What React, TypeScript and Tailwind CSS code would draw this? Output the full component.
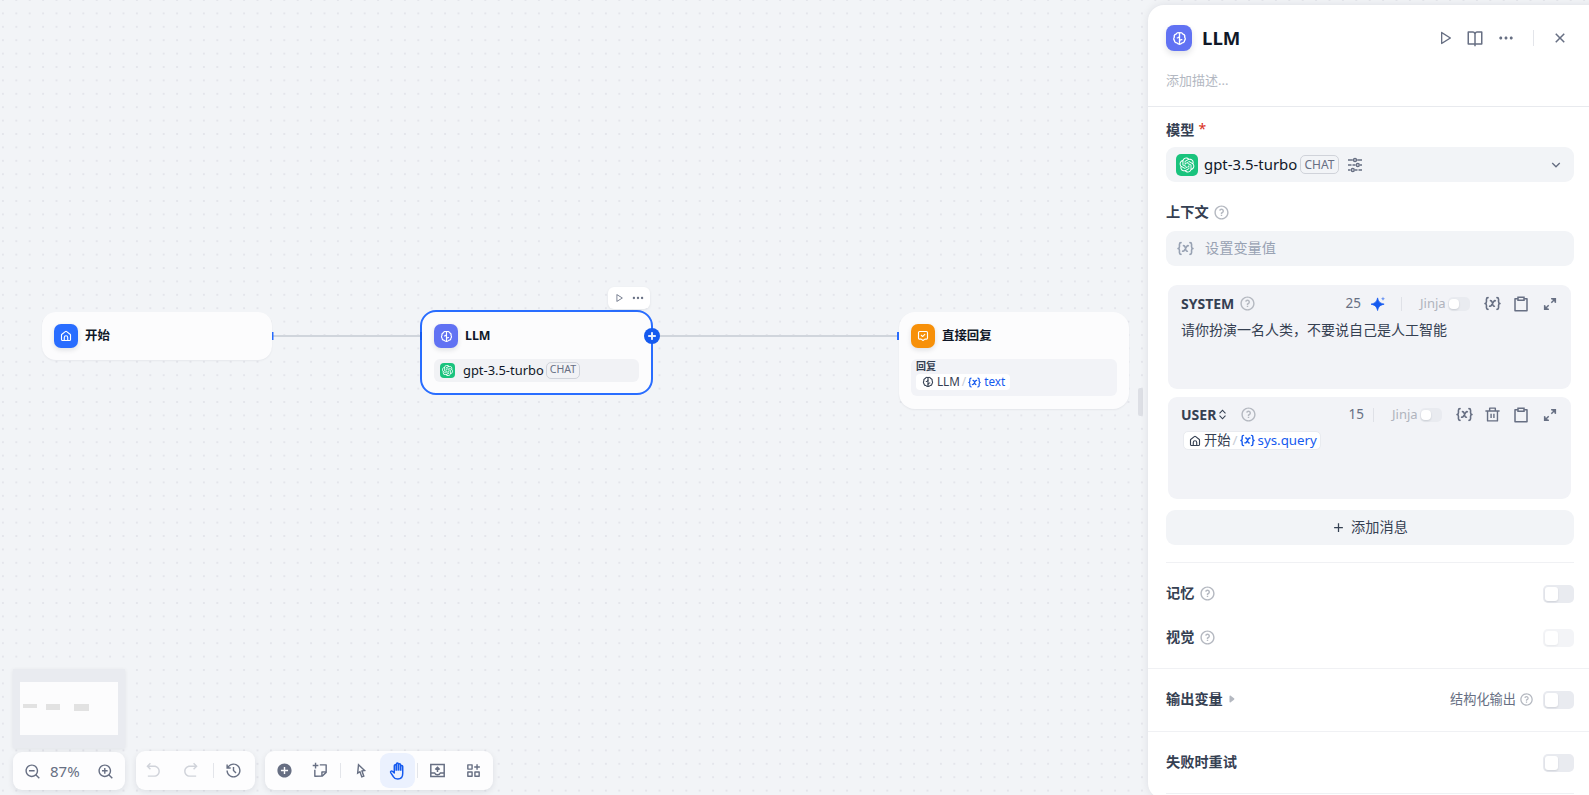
import type { ReactNode } from 'react'
import {
  RiPlayLargeLine, RiBookOpenLine, RiMoreFill, RiCloseLine, RiArrowDownSLine,
  RiQuestionLine, RiClipboardLine, RiDeleteBinLine, RiZoomOutLine, RiZoomInLine,
  RiArrowGoBackLine, RiArrowGoForwardLine, RiHistoryLine, RiAddCircleFill, RiStickyNoteAddLine,
  RiCursorLine, RiFunctionAddLine, RiAddLine, RiOpenaiFill, RiExpandUpDownLine,
} from 'react-icons/ri'

type IconProps = { className?: string }

const BrainIcon = ({ className }: IconProps) => (
  <svg viewBox="0 0 16 16" fill="none" stroke="currentColor" strokeWidth="1.4" strokeLinecap="round" strokeLinejoin="round" className={className}>
    <path d="M8 1.900v12.200" />
    <path d="M8 2.200C6.500 1.300 4.800 2 4.300 3.400 2.800 3.900 2.100 5.400 2.500 6.700 1.600 7.600 1.600 9.200 2.600 10 2.600 11.700 3.900 12.800 5.300 12.600 6.100 13.800 7.200 14.200 8 13.600" />
    <path d="M8 2.200C9.500 1.300 11.200 2 11.700 3.400 13.200 3.900 13.900 5.400 13.500 6.700 14.400 7.600 14.400 9.200 13.400 10 13.400 11.700 12.100 12.800 10.700 12.600 9.900 13.800 8.800 14.200 8 13.600" />
    <path d="M5.600 7.300c1.400.1 2.300-.6 2.400-1.900M10.500 9.300c-1.400-.1-2.400.6-2.500 1.900" />
  </svg>
)

const HomeIcon = ({ className }: IconProps) => (
  <svg viewBox="0 0 16 16" fill="none" stroke="currentColor" strokeWidth="1.500" strokeLinecap="round" strokeLinejoin="round" className={className}>
    <path d="M2 6.800c0-.5.200-.9.600-1.200l4.500-3.500c.5-.4 1.300-.4 1.800 0l4.500 3.500c.4.300.6.700.6 1.200V12.500c0 .8-.7 1.500-1.500 1.500h-9C2.700 14 2 13.300 2 12.500z" />
    <path d="M5.700 14V9.900a2.300 2.300 0 0 1 4.600 0V14" />
  </svg>
)

const AnswerIcon = ({ className }: IconProps) => (
  <svg viewBox="0 0 16 16" fill="none" stroke="currentColor" strokeWidth="1.500" strokeLinecap="round" strokeLinejoin="round" className={className}>
    <path d="M3.500 2h9c.8 0 1.500.7 1.500 1.500v7.200c0 .8-.7 1.500-1.500 1.500h-2L8 14l-2.500-1.800h-2c-.8 0-1.500-.7-1.500-1.500V3.500C2 2.700 2.700 2 3.500 2z" />
    <path d="M5.700 7l1.700 1.700 3-3" />
  </svg>
)

const VarIcon = ({ className }: IconProps) => (
  <svg viewBox="0 0 16 16" fill="none" stroke="currentColor" strokeWidth="1.500" strokeLinecap="round" strokeLinejoin="round" className={className}>
    <path d="M3.800 2.500C2.600 2.500 2.300 3.200 2.300 4v2.300c0 .9-.4 1.500-1.300 1.700.9.200 1.300.8 1.300 1.700V12c0 .8.300 1.500 1.500 1.500" />
    <path d="M12.200 2.500c1.200 0 1.500.7 1.500 1.500v2.300c0 .9.400 1.500 1.300 1.700-.9.200-1.300.8-1.300 1.700V12c0 .8-.3 1.500-1.500 1.500" />
    <path d="M6.100 5.300c.9 0 1.200.3 1.500 1.200l.8 2.800c.3.900.6 1.300 1.400 1.300M10.700 5.400c-.6-.2-1.100.1-1.600.9L7 9.600c-.5.800-1 1.100-1.700.9" />
  </svg>
)

const SlidersIcon = ({ className }: IconProps) => (
  <svg viewBox="0 0 16 16" fill="none" stroke="currentColor" strokeWidth="1.350" className={className}>
    <path d="M1 3h4.800M10.200 3H15M1 8h3.500M5.500 8h3M13 8h2M1 13h2.500M8 13h2.500M11.500 13H15" />
    <circle cx="8" cy="3" r="1.500" />
    <circle cx="10.800" cy="8" r="1.500" />
    <circle cx="5.800" cy="13" r="1.500" />
  </svg>
)

const HandIcon = ({ className }: IconProps) => (
  <svg viewBox="0 0 16 16" fill="none" className={className}>
    <path d="M4.600 8V3.200a.9.900 0 0 1 1.800 0V1.900a.9.900 0 0 1 1.900 0v.7a.9.900 0 0 1 1.900 0v1.100a.9.900 0 0 1 1.800 0V8z" fill="#155aef" fillOpacity=".3" />
    <path d="M4.700 9.700V3.300a.9.900 0 0 1 1.800 0V7.200M6.500 7V1.900a.95.950 0 0 1 1.900 0V7M8.400 7V2.500a.95.950 0 0 1 1.900 0V7.200M10.300 7.200V4a.95.950 0 0 1 1.900 0v6.300c0 2.900-1.700 4.900-4.400 4.900-2 0-3.100-.8-4-2.300L1.500 9.400c-.5-.9.600-1.900 1.500-1.200L4.700 9.700" stroke="#155aef" strokeWidth="1.300" strokeLinecap="round" strokeLinejoin="round" />
  </svg>
)

const ExportIcon = ({ className }: IconProps) => (
  <svg viewBox="0 0 16 16" fill="none" stroke="currentColor" strokeWidth="1.400" className={className}>
    <path d="M1.700 2.300h12.600v11.400H1.700zM1.700 10.300h3.600c.5 1.100 1.500 1.800 2.700 1.800s2.200-.7 2.700-1.800h3.600M8 9.500V5.200M5.900 7.100L8 5l2.100 2.100" />
  </svg>
)

const ExpandIcon = ({ className }: IconProps) => (
  <svg viewBox="0 0 14 14" fill="none" stroke="currentColor" strokeWidth="1.500" className={className}>
    <path d="M12.300 1.700L8.300 5.700M1.700 12.300l4-4" />
    <path d="M8.200 1.700h4.100v4.100M5.800 12.300H1.700V8.200" />
    <path d="M9.800 1.700h2.500v2.500zM4.200 12.300H1.700V9.800z" fill="currentColor" />
  </svg>
)

const SparkIcon = ({ className }: IconProps) => (
  <svg viewBox="0 0 16 16" className={className}>
    <path d="M7 2C8 6.100 9.500 7.600 14 8.700 9.500 9.800 8 11.300 7 15.500 6 11.300 4.500 9.800 0 8.700 4.500 7.600 6 6.100 7 2z" fill="#155aef" stroke="#155aef" strokeWidth=".8" strokeLinejoin="round" />
    <path d="M12.800.5c.4 1.500.9 2 2.400 2.300-1.500.3-2 .8-2.400 2.300-.4-1.500-.9-2-2.400-2.300 1.500-.3 2-.8 2.400-2.300z" fill="#155aef" opacity=".6" />
  </svg>
)

const Help = ({ className = '' }: IconProps) => <RiQuestionLine className={`size-[17px] shrink-0 text-[#b4b8c0] ${className}`} />

const ChatBadge = ({ className = '' }: IconProps) => (
  <span className={`flex items-center justify-center rounded-[5px] border border-[#d0d3da] text-[#676f83] ${className}`}>CHAT</span>
)

function Toggle({ faded = false }: { faded?: boolean }) {
  return (
    <span className={`flex h-[18px] w-[31px] shrink-0 items-center rounded-[5px] bg-[#e9ebf0] px-[2px] ${faded ? 'opacity-50' : ''}`}>
      <span className="h-[14px] w-[13px] rounded-[3px] bg-white shadow-[0_1px_2px_rgba(16,24,40,0.12)]" />
    </span>
  )
}

function Jinja() {
  return (
    <>
      <span className="w-[28px] text-[13px] text-[#b0b4bd]">Jinja</span>
      <span className="flex h-[14px] w-[22px] items-center rounded-[5px] bg-[#e9ebf0] px-px">
        <span className="size-[10px] rounded-[4px] bg-white shadow-[0_1px_2px_rgba(16,24,40,0.15)]" />
      </span>
    </>
  )
}

function Row({ label, className = '', children, right }: { label: string; className?: string; children?: ReactNode; right?: ReactNode }) {
  return (
    <div className={`flex items-center justify-between pr-[15px] pl-[18px] ${className}`}>
      <div className="flex items-center">
        <span className="-mt-[2px] text-[14.2px] font-bold text-[#354052]">{label}</span>
        {children}
      </div>
      <div className="flex items-center">{right}</div>
    </div>
  )
}

function Panel() {
  return (
    <aside className="absolute top-[5px] left-[1148px] flex h-[794px] w-[460px] flex-col overflow-hidden rounded-2xl bg-white pr-[19px] shadow-[0_0_8px_rgba(16,24,40,0.09)]">
      <header className="h-[102px] shrink-0 border-b border-[#e8eaee] pl-[18px]">
        <div className="flex h-[66px] items-center">
          <span className="flex size-[26px] items-center justify-center rounded-[8px] bg-[#6172f3] text-white shadow-[0_3px_6px_rgba(16,24,40,0.12)]">
            <BrainIcon className="size-[15px]" />
          </span>
          <h1 className="ml-[10px] w-[232px] text-[18.600px] font-bold text-[#101828]">LLM</h1>
          <div className="flex items-center text-[#676f83]">
            <RiPlayLargeLine className="ml-[3px] size-[16px]" />
            <RiBookOpenLine className="ml-[13px] size-[18px]" />
            <RiMoreFill className="ml-[13px] size-[18px]" />
            <span className="ml-[18px] h-4 w-px bg-[#e3e5ea]" />
            <RiCloseLine className="ml-[17px] size-[18px]" />
          </div>
        </div>
        <p className="-mt-px text-[13px] leading-[21px] text-[#b3b8c2]">添加描述...</p>
      </header>

      <Row label="模型" className="h-[40px] shrink-0 pt-[7px]">
        <span className="-mt-[3px] ml-[4px] text-[14px] leading-4 text-[#d92d20]">*</span>
      </Row>
      <div className="mr-[15px] ml-[18px] flex h-[35px] shrink-0 items-center rounded-[9px] bg-[#f2f4f7] px-[10px]">
        <span className="flex size-[22px] items-center justify-center rounded-[5px] bg-[#19c37d] text-white">
          <RiOpenaiFill className="size-[18px]" />
        </span>
        <span className="ml-[6px] w-[96px] text-[14.900px] whitespace-nowrap text-[#101828]">gpt-3.5-turbo</span>
        <ChatBadge className="h-[19px] w-[39px] text-[12px]" />
        <SlidersIcon className="ml-[8px] size-[16px] text-[#676f83]" />
        <RiArrowDownSLine className="ml-auto size-[16px] text-[#676f83]" />
      </div>

      <Row label="上下文" className="h-[49px] shrink-0 pt-[13px]"><Help className="ml-[4px]" /></Row>
      <div className="mr-[15px] ml-[18px] flex h-[35px] shrink-0 items-center rounded-[9px] bg-[#f2f4f7] pl-[11px] text-[#98a2b3]">
        <VarIcon className="size-[17px]" />
        <span className="-mt-[2px] ml-[11px] text-[14.2px]">设置变量值</span>
      </div>

      <section className="mt-[19px] mr-[18px] ml-[20px] h-[104px] shrink-0 rounded-[9px] bg-[#f2f3f7]">
        <div className="flex h-[37px] items-center pl-[13px] text-[#676f83]">
          <span className="w-[58px] text-[14px] font-bold text-[#354052]">SYSTEM</span>
          <Help />
          <span className="ml-auto text-[13.500px]">25</span>
          <SparkIcon className="ml-[10px] size-[15px]" />
          <span className="mr-[18px] ml-[15px] h-[14px] w-px bg-[#dfe1e7]" />
          <Jinja />
          <VarIcon className="ml-[14px] size-[17px]" />
          <RiClipboardLine className="ml-[11px] size-[18px]" />
          <ExpandIcon className="mr-[14px] ml-[13px] size-[14px]" />
        </div>
        <p className="-mt-px pl-[13px] text-[14px] leading-[18px] text-[#354052]">请你扮演一名人类，不要说自己是人工智能</p>
      </section>

      <section className="mt-[8px] mr-[18px] ml-[20px] h-[102px] shrink-0 rounded-[9px] bg-[#f2f3f7]">
        <div className="flex h-[35px] items-center pl-[13px] text-[#676f83]">
          <span className="text-[14px] font-bold text-[#354052]">USER</span>
          <RiExpandUpDownLine className="size-[13px] text-[#354052]" />
          <Help className="ml-[11px]" />
          <span className="ml-auto text-[13.500px]">15</span>
          <span className="mr-[18px] ml-[9px] h-[14px] w-px bg-[#dfe1e7]" />
          <Jinja />
          <VarIcon className="ml-[14px] size-[17px]" />
          <RiDeleteBinLine className="ml-[11px] size-[17px]" />
          <RiClipboardLine className="ml-[11px] size-[18px]" />
          <ExpandIcon className="mr-[14px] ml-[13px] size-[14px]" />
        </div>
        <div className="-mt-px ml-[15px] flex h-[19px] w-[138px] items-center rounded-[5px] border border-[#e9ebf0] bg-white pl-[5px] text-[13.300px] whitespace-nowrap text-[#354052]">
          <HomeIcon className="size-[12px]" />
          <span className="ml-[3px]">开始</span>
          <span className="mx-[2px] text-[#c8ccd5]">/</span>
          <VarIcon className="size-[15px] text-[#155aef]" />
          <span className="ml-[3px] text-[#155aef]">sys.query</span>
        </div>
      </section>

      <div className="mt-[11px] mr-[15px] ml-[18px] flex h-[35px] shrink-0 items-center justify-center rounded-[9px] bg-[#f2f4f7] pr-px text-[14.2px] text-[#354052]">
        <RiAddLine className="mr-[5px] size-[15px]" />
        <span className="-mt-[2px]">添加消息</span>
      </div>
      <div className="mt-[17px] mr-[15px] ml-[18px] h-px shrink-0 bg-[#f0f1f4]" />

      <Row label="记忆" className="mt-[9px] h-[44px] shrink-0" right={<Toggle />}><Help className="-mt-px ml-[5px]" /></Row>
      <Row label="视觉" className="h-[44px] shrink-0" right={<Toggle faded />}><Help className="-mt-px ml-[5px]" /></Row>
      <div className="mt-[8px] h-px shrink-0 bg-[#f0f1f4]" />
      <Row
        label="输出变量"
        className="h-[62px] shrink-0"
        right={(
          <>
            <span className="-mt-px text-[13.200px] text-[#676f83]">结构化输出</span>
            <RiQuestionLine className="mr-[9px] ml-[3px] size-[15px] text-[#b4b8c0]" />
            <Toggle />
          </>
        )}
      >
        <svg viewBox="0 0 6 8" className="-mt-px ml-[6px] h-[8px] w-[6px] text-[#b4b8c0]"><path d="M.5 1.200C.5.500 1.200.300 1.700.700L5 3.300c.5.400.5 1 0 1.400L1.700 7.300C1.200 7.700.5 7.500.5 6.800z" fill="currentColor" /></svg>
      </Row>
      <div className="h-px shrink-0 bg-[#f0f1f4]" />
      <Row label="失败时重试" className="h-[61px] shrink-0" right={<Toggle />} />
      <div className="mr-[15px] ml-[18px] h-px shrink-0 bg-[#f0f1f4]" />
    </aside>
  )
}

function NodeTitle({ color, icon, title }: { color: string; icon: ReactNode; title: string }) {
  return (
    <div className="flex items-center">
      <span className={`flex size-[24px] items-center justify-center rounded-[7px] text-white shadow-[0_2px_5px_rgba(16,24,40,0.12)] ${color}`}>{icon}</span>
      <span className="ml-[7px] text-[12.400px] font-bold text-[#101828]">{title}</span>
    </div>
  )
}

function Canvas() {
  return (
    <>
      <svg className="absolute inset-0 size-full" aria-hidden="true">
        <defs>
          <pattern id="dots" x="-3.800" y="-6.700" width="13.400" height="13.400" patternUnits="userSpaceOnUse">
            <circle cx="6.700" cy="6.700" r="0.950" fill="#dfe1e7" />
          </pattern>
        </defs>
        <rect width="100%" height="100%" fill="url(#dots)" />
        <path d="M272 336H421M652 336H898" stroke="#d0d5dc" strokeWidth="2" />
        <path d="M272.500 332v8M898 332v8" stroke="#296dff" strokeWidth="2" />
      </svg>

      <div className="absolute top-[312px] left-[42px] h-[48px] w-[230px] rounded-[14px] bg-[#fcfcfd] px-[12px] pt-[12px] shadow-[0_1px_2px_rgba(16,24,40,0.05)]">
        <NodeTitle color="bg-[#296dff]" icon={<HomeIcon className="size-[12px]" />} title="开始" />
      </div>

      <div className="absolute top-[310px] left-[420px] h-[85px] w-[233px] rounded-[16px] border-2 border-[#296dff] bg-[#fcfcfd] px-[12px] pt-[12px]">
        <NodeTitle color="bg-[#6172f3]" icon={<BrainIcon className="size-[13px]" />} title="LLM" />
        <div className="mt-[11px] flex h-[23px] w-[205px] items-center rounded-[6px] bg-[#f1f2f5] pl-[6px]">
          <span className="flex size-[15px] items-center justify-center rounded-[4px] bg-[#19c37d] text-white"><RiOpenaiFill className="size-[13px]" /></span>
          <span className="ml-[8px] w-[83px] pt-px text-[12.900px] whitespace-nowrap text-[#101828]">gpt-3.5-turbo</span>
          <ChatBadge className="-mt-px h-[17px] w-[34px] text-[10.600px]" />
        </div>
      </div>
      <span className="absolute top-[332px] left-[420px] h-[8px] w-[2px] bg-[#155aef]" />
      <span className="absolute top-[328px] left-[643.500px] flex size-[16px] items-center justify-center rounded-full bg-[#155aef] text-white">
        <RiAddLine className="size-[12px] stroke-[1.500]" stroke="currentColor" />
      </span>
      <div className="absolute top-[287px] left-[608px] flex h-[22px] w-[42px] items-center rounded-[6px] bg-white pl-[6px] text-[#676f83] shadow-[0_1px_3px_rgba(16,24,40,0.08)]">
        <RiPlayLargeLine className="size-[10px]" />
        <RiMoreFill className="ml-[7px] size-[14px]" />
      </div>

      <div className="absolute top-[312px] left-[899px] h-[97px] w-[230px] rounded-[16px] bg-[#fcfcfd] px-[12px] pt-[12px] shadow-[0_1px_2px_rgba(16,24,40,0.06)]">
        <NodeTitle color="bg-[#f79009]" icon={<AnswerIcon className="size-[12px]" />} title="直接回复" />
        <div className="mt-[11px] h-[37px] rounded-[6px] bg-[#f2f3f7] px-[5px] pt-px">
          <div className="h-[14px] text-[10px] leading-[13px] font-bold text-[#354052]">回复</div>
          <div className="flex h-[16px] w-[94px] items-center rounded-[4px] bg-white pl-[6px] text-[11.700px] whitespace-nowrap text-[#354052]">
            <BrainIcon className="size-[12px]" />
            <span className="ml-[3px]">LLM</span>
            <span className="mx-[2px] text-[#c8ccd5]">/</span>
            <VarIcon className="size-[13px] text-[#155aef]" />
            <span className="ml-[3px] text-[#155aef]">text</span>
          </div>
        </div>
      </div>

      <span className="absolute top-[388px] left-[1138px] h-[28px] w-[5px] rounded-[2px] bg-[#dddfe5]" />
    </>
  )
}

const barClass = 'flex items-center rounded-[9px] bg-[#fdfdfe] text-[#676f83] shadow-[0_2px_6px_rgba(16,24,40,0.09)]'

function BottomBars() {
  return (
    <>
      <svg viewBox="0 0 112 79" className="absolute top-[669px] left-[13px] h-[79px] w-[112px] shadow-[0_1px_4px_rgba(16,24,40,0.08)]">
        <rect width="112" height="79" fill="#e9ebf0" />
        <rect x="7" y="13" width="98" height="53" fill="#fcfcfd" />
        <path d="M10 35h14v4H10zM33 35h14v6H33zM61 35h15v7H61z" fill="#e2e2e2" />
      </svg>
      <div className="absolute top-[751px] left-[13px] flex items-start">
        <div className={`${barClass} mt-px h-[38px] w-[112px] pl-[11px]`}>
          <RiZoomOutLine className="size-[17px]" />
          <span className="ml-[9px] w-[36px] text-[15px]">87%</span>
          <RiZoomInLine className="ml-[11px] size-[17px]" />
        </div>
        <div className={`${barClass} ml-[11px] h-[39px] w-[119px] pl-[9px]`}>
          <RiArrowGoBackLine className="size-[17px] text-[#d0d3da]" />
          <RiArrowGoForwardLine className="ml-[20px] size-[17px] text-[#d0d3da]" />
          <span className="mr-[11px] ml-[14px] h-[15px] w-px bg-[#e3e5ea]" />
          <RiHistoryLine className="size-[17px]" />
        </div>
        <div className={`${barClass} ml-[10px] h-[39px] w-[228px] pl-[11px]`}>
          <RiAddCircleFill className="size-[17px]" />
          <RiStickyNoteAddLine className="ml-[19px] size-[17px]" />
          <span className="ml-[11px] h-[15px] w-px bg-[#e3e5ea]" />
          <RiCursorLine className="ml-[11px] size-[17px]" />
          <span className="ml-[11px] flex size-[35px] items-center justify-center rounded-[9px] bg-[#ebf1fe]">
            <HandIcon className="size-[18px]" />
          </span>
          <span className="ml-[2px] h-[15px] w-px bg-[#e3e5ea]" />
          <ExportIcon className="ml-[11px] size-[17px]" />
          <RiFunctionAddLine className="ml-[19px] size-[17px]" />
        </div>
      </div>
    </>
  )
}

export default function App() {
  return (
    <main className="relative h-[795px] w-full overflow-hidden bg-[#f2f4f7] font-['Noto_Sans','Noto_Sans_CJK_SC',sans-serif]">
      <Canvas />
      <BottomBars />
      <Panel />
    </main>
  )
}
